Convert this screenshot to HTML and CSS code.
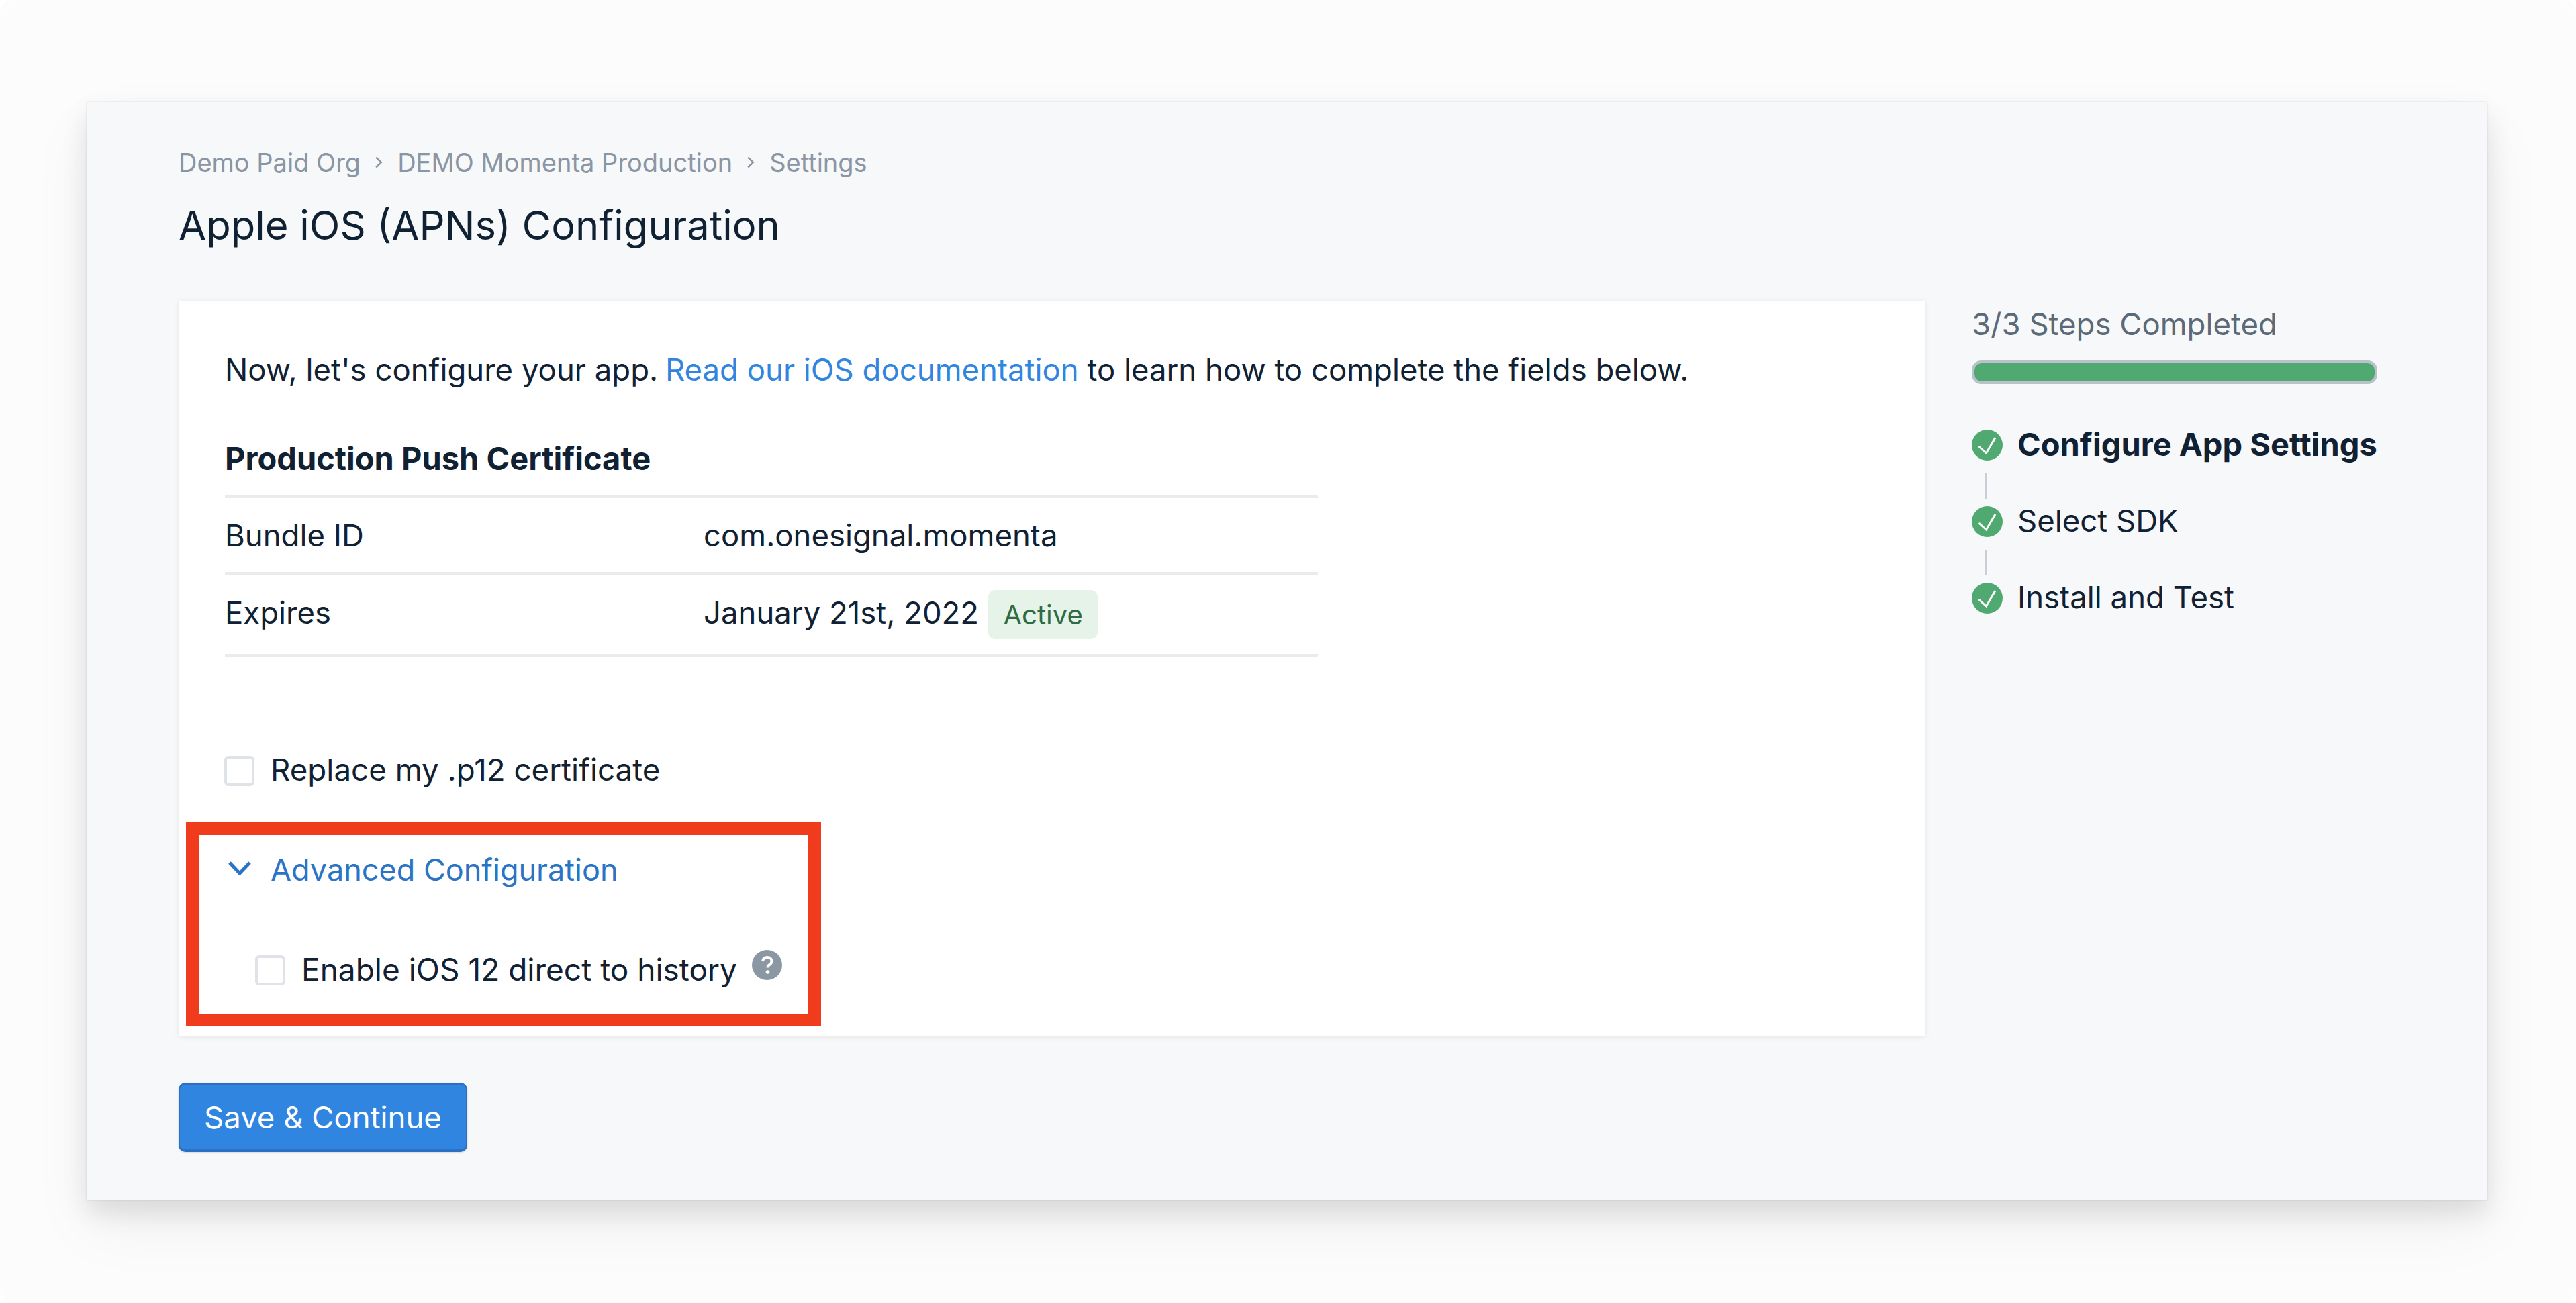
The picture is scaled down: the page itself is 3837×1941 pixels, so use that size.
FILE: index.html
```html
<!DOCTYPE html>
<html lang="en">
<head>
<meta charset="utf-8">
<title>Apple iOS (APNs) Configuration</title>
<link rel="stylesheet" href="styles.css">
</head>
<body>
<div class="stage">
  <main class="panel">
    <nav class="crumbs"><span>Demo Paid Org</span><svg class="sep" viewBox="0 0 10 16"><path d="M2 2l6 6-6 6"/></svg><span>DEMO Momenta Production</span><svg class="sep" viewBox="0 0 10 16"><path d="M2 2l6 6-6 6"/></svg><span>Settings</span></nav>
    <h1 class="title">Apple iOS (APNs) Configuration</h1>
    <div class="columns">
      <section class="card">
        <p class="intro">Now, let's configure your app. <a class="link" href="#">Read our iOS documentation</a> to learn how to complete the fields below.</p>
        <h2 class="cert-title">Production Push Certificate</h2>
        <div class="rows">
          <div class="row"><span class="row-key">Bundle ID</span><span>com.onesignal.momenta</span></div>
          <div class="row row-tall"><span class="row-key">Expires</span><span>January 21st, 2022</span><span class="badge">Active</span></div>
        </div>
        <label class="check check-replace"><span class="box"></span><span class="lift">Replace my .p12 certificate</span></label>
        <div class="advanced">
          <svg class="chevron" viewBox="0 0 34 21"><path d="M2 2l15 16L32 2"/></svg>
          <span class="lift">Advanced Configuration</span>
        </div>
        <label class="check check-ios"><span class="box"></span><span class="lift">Enable iOS 12 direct to history</span><svg class="help" viewBox="0 0 45 45"><circle cx="22.500" cy="22.500" r="22.500"/><path class="help-q" d="M16 17c.5-4 3.300-6 6.800-6 3.900 0 6.700 2.300 6.700 5.700 0 2.600-1.400 4-3.300 5.300-2 1.300-2.700 2.200-2.700 4.500"/><circle class="help-dot" cx="23.500" cy="33" r="2.800"/></svg></label>
        <div class="highlight"></div>
      </section>
      <aside class="side">
        <div class="side-title">3/3 Steps Completed</div>
        <div class="progress"><div class="progress-fill"></div></div>
        <ol class="steps">
          <li class="step step-current"><svg class="tick" viewBox="0 0 46 46"><circle cx="23" cy="23" r="23"/><path d="M10.500 25l11 10L35 12"/></svg><span class="lift">Configure App Settings</span></li>
          <li class="connector"></li>
          <li class="step"><svg class="tick" viewBox="0 0 46 46"><circle cx="23" cy="23" r="23"/><path d="M10.500 25l11 10L35 12"/></svg><span class="lift">Select SDK</span></li>
          <li class="connector"></li>
          <li class="step"><svg class="tick" viewBox="0 0 46 46"><circle cx="23" cy="23" r="23"/><path d="M10.500 25l11 10L35 12"/></svg><span class="lift">Install and Test</span></li>
        </ol>
      </aside>
    </div>
    <button class="save" type="button">Save &amp; Continue</button>
  </main>
</div>
</body>
</html>
```
FILE: styles.css
```css
* { box-sizing: border-box; }
html, body { margin: 0; padding: 0; background: #fff; }
body { font-family: Inter, "Noto Sans", "Liberation Sans", sans-serif; font-size: 45.500px; color: #0f2133; }
.stage { width: 3837px; height: 1941px; padding: 152px 132px 0 129px; background: #fbfcfb; border-radius: 20px; overflow: hidden; }
.panel { width: 3576px; height: 1636px; padding: 65px 137px 0; background: #f7f8fa; box-shadow: 0 0 2px rgba(0,0,0,.12), 0 20px 36px rgba(0,0,0,.1), 0 40px 90px rgba(0,0,0,.05); }
.crumbs { display: flex; align-items: center; height: 50px; font-size: 38px; color: #8a96a3; }
.sep { width: 14px; height: 20px; margin: 0 21px 0 20px; fill: none; stroke: #8a96a3; stroke-width: 2; }
.title { margin: 23px 0 0; height: 90px; font-size: 59.700px; line-height: 90px; font-weight: 400; color: #0f2133; }
.columns { display: flex; margin-top: 68px; }
.card { position: relative; width: 2602px; height: 1096px; padding: 0 69px; background: #fff; box-shadow: 0 1px 8px rgba(0,0,0,.08); }
.intro { margin: 76px 0 0; height: 54px; line-height: 54px; white-space: nowrap; }
.link { color: #2f85e0; text-decoration: none; margin-left: -2px; }
.cert-title { margin: 78px 0 0; height: 54px; font-size: 47px; line-height: 54px; font-weight: 700; white-space: nowrap; }
.rows { width: 1628px; margin-top: 28px; border-top: 4px solid #e9ebed; }
.row { display: flex; align-items: center; height: 114px; border-bottom: 4px solid #e9ebed; }
.row-tall { height: 122px; padding-bottom: 6px; }
.row-key { width: 713px; }
.badge { display: flex; align-items: center; justify-content: center; width: 163px; height: 73px; margin: 7px 0 0 14px; background: #e5f3e9; color: #2f6b45; font-size: 40px; border-radius: 10px; }
.lift { margin-bottom: 4px; }
.check { display: flex; align-items: center; white-space: nowrap; font-size: 45.700px; }
.box { width: 45px; height: 45px; margin-right: 24px; border: 4px solid #dfe3e7; border-radius: 6px; background: #fff; flex: none; }
.check-replace { margin-top: 148px; height: 45px; margin-left: -1px; }
.advanced { display: flex; align-items: center; height: 54px; margin-top: 99px; margin-left: -1px; color: #2a74c6; font-size: 45px; }
.chevron { width: 34px; height: 21px; margin: 0 29px 7px 6px; fill: none; stroke: #2a74c6; stroke-width: 5; }
.check-ios { margin: 99px 0 0 45px; height: 45px; font-size: 46px; }
.help { width: 45px; height: 45px; margin: -17px 0 0 22px; flex: none; }
.help circle { fill: #8b97a3; }
.help .help-q { fill: none; stroke: #fff; stroke-width: 4; }
.help .help-dot { fill: #fff; }
.highlight { position: absolute; left: 11px; top: 777px; width: 946px; height: 304px; border: 19px solid #f13b1d; }
.side { width: 604px; margin-left: 69px; }
.side-title { height: 54px; margin-top: 8px; line-height: 54px; color: #5c6a77; white-space: nowrap; }
.progress { height: 35px; margin-top: 27px; border: 4px solid #b9c1ca; border-radius: 14px; background: #b9c1ca; overflow: hidden; }
.progress-fill { height: 100%; background: #50a970; border-radius: 10px; }
.steps { list-style: none; margin: 68px 0 0; padding: 0; }
.step { display: flex; align-items: center; height: 46px; white-space: nowrap; }
.step-current { font-weight: 700; font-size: 47px; }
.tick { width: 46px; height: 46px; margin-right: 22px; flex: none; }
.tick circle { fill: #50a970; }
.tick path { fill: none; stroke: #fff; stroke-width: 3; }
.connector { width: 3px; height: 38px; margin: 19px 0 11px 20px; background: #c9ced4; }
.save { display: block; width: 430px; height: 103px; margin-top: 69px; padding: 0; background: #3085e0; border: 3px solid #2b70c2; border-width: 3px 2px 4px; border-radius: 10px; color: #fff; font-family: inherit; font-size: 45.500px; font-weight: 400; box-shadow: 0 1px 3px rgba(0,0,0,.15); }
```
